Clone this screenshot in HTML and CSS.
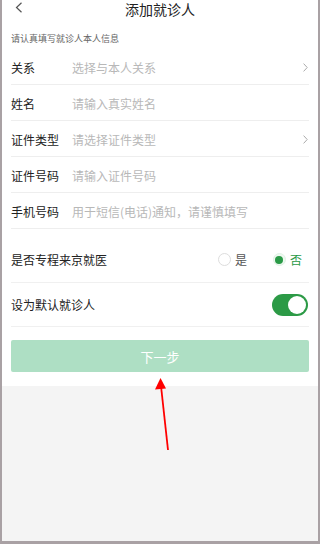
FILE: index.html
```html
<!DOCTYPE html>
<html lang="zh">
<head>
<meta charset="utf-8">
<link rel="stylesheet" href="styles.css">
</head>
<body>
<div class="screen">
  <div class="sheet">
    <div class="header">
      <svg class="back" width="8" height="11" viewBox="0 0 8 11"><path d="M6.5 0.8 L1.5 5.5 L6.5 10.2" fill="none" stroke="#555" stroke-width="1.2"/></svg>
      <span class="title">添加就诊人</span>
    </div>
    <div class="tip">请认真填写就诊人本人信息</div>
    <div class="group">
      <div class="row"><span class="label">关系</span><span class="ph">选择与本人关系</span><svg class="arrow-r" width="5" height="9" viewBox="0 0 5 9"><path d="M0.6 0.6 L4.2 4.5 L0.6 8.4" fill="none" stroke="#aaa" stroke-width="1"/></svg></div>
      <div class="row"><span class="label">姓名</span><span class="ph">请输入真实姓名</span></div>
      <div class="row"><span class="label">证件类型</span><span class="ph">请选择证件类型</span><svg class="arrow-r" width="5" height="9" viewBox="0 0 5 9"><path d="M0.6 0.6 L4.2 4.5 L0.6 8.4" fill="none" stroke="#aaa" stroke-width="1"/></svg></div>
      <div class="row"><span class="label">证件号码</span><span class="ph">请输入证件号码</span></div>
      <div class="row"><span class="label">手机号码</span><span class="ph">用于短信(电话)通知，请谨慎填写</span></div>
    </div>
    <div class="group2">
      <div class="row2 first">
        <span class="label2">是否专程来京就医</span>
        <div class="radios">
          <span class="opt"><span class="radio"></span><span class="optx">是</span></span>
          <span class="opt on"><span class="radio"><span class="dot"></span></span><span class="optx">否</span></span>
        </div>
      </div>
      <div class="row2 second">
        <span class="label2">设为默认就诊人</span>
        <span class="toggle"><span class="knob"></span></span>
      </div>
    </div>
    <div class="btn">下一步</div>
  </div>
  <svg class="annot" width="40" height="90" viewBox="0 0 40 90"><line x1="27" y1="86" x2="20" y2="22" stroke="#ff0000" stroke-width="1.8"/><polygon points="19.5,14 14,25.5 25,24.5" fill="#ff0000"/></svg>
</div>
</body>
</html>
```
FILE: styles.css
```css
html, body {
  margin: 0;
  padding: 0;
}
body {
  background: #a9a1a4;
  width: 320px;
  height: 544px;
  overflow: hidden;
  font-family: "Noto Sans CJK SC", "Noto Sans", sans-serif;
}
.screen {
  position: relative;
  margin-left: 2px;
  width: 316px;
  height: 541px;
  background: #f4f4f4;
}
.sheet {
  background: #fff;
  padding: 0 9px 14px;
}
.header {
  position: relative;
  height: 17px;
  display: flex;
  justify-content: center;
  align-items: flex-start;
}
.back {
  position: absolute;
  left: 4px;
  top: 2px;
}
.title {
  font-size: 14px;
  line-height: 18px;
  height: 17px;
  color: #222;
}
.tip {
  margin-top: 15px;
  font-size: 9px;
  line-height: 14px;
  height: 14px;
  color: #666;
}
.group {
  margin-top: 3px;
}
.row {
  height: 34px;
  border-bottom: 1px solid #eeeeee;
  display: flex;
  align-items: center;
  padding-top: 1px;
  box-sizing: content-box;
}
.label {
  width: 61px;
  font-size: 12px;
  color: #222;
  flex: none;
}
.ph {
  font-size: 12px;
  color: #b8b8b8;
  flex: 1;
}
.arrow-r {
  margin-right: 1px;
}
.group2 {
  margin-top: 8px;
}
.row2 {
  display: flex;
  align-items: center;
  justify-content: space-between;
  border-bottom: 1px solid #f0f0f0;
}
.row2.first {
  height: 45px;
}
.row2.second {
  height: 43px;
}
.label2 {
  font-size: 12px;
  color: #222;
}
.radios {
  display: flex;
  gap: 26px;
  margin-right: 7px;
}
.opt {
  display: flex;
  align-items: center;
  gap: 4px;
  font-size: 12px;
  color: #555;
}
.opt.on {
  color: #2a9a47;
}
.radio {
  width: 11px;
  height: 11px;
  border: 1px solid #ddd;
  border-radius: 50%;
  display: flex;
  align-items: center;
  justify-content: center;
}
.opt.on .radio {
  border-color: #e1f2e5;
  background: #eef8f0;
}
.dot {
  width: 8px;
  height: 8px;
  border-radius: 50%;
  background: #2a9a47;
}
.toggle {
  width: 36px;
  height: 22px;
  border-radius: 11px;
  background: #2c9a46;
  position: relative;
  margin-right: 1px;
}
.knob {
  position: absolute;
  right: 2px;
  top: 2px;
  width: 18px;
  height: 18px;
  border-radius: 50%;
  background: #fff;
}
.btn {
  margin-top: 13px;
  height: 32px;
  border-radius: 2px;
  background: #aedfc4;
  color: #fff;
  font-size: 13px;
  display: flex;
  align-items: center;
  justify-content: center;
}
.annot {
  position: absolute;
  left: 139px;
  top: 364px;
}
```
